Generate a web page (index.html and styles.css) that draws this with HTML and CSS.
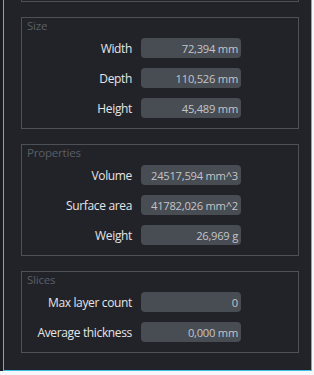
FILE: index.html
```html
<html>
<head>
  <title>Model info</title>
  <link rel="stylesheet" href="styles.css">
</head>
<body>
  <div class="window">
    <div class="panel">
      <div class="group-end"></div>

      <div class="group">
        <div class="title">Size</div>
        <div class="rows">
          <div class="label">Width</div><div class="field">72,394 mm</div>
          <div class="label">Depth</div><div class="field">110,526 mm</div>
          <div class="label">Height</div><div class="field">45,489 mm</div>
        </div>
      </div>

      <div class="group">
        <div class="title">Properties</div>
        <div class="rows">
          <div class="label">Volume</div><div class="field">24517,594 mm^3</div>
          <div class="label">Surface area</div><div class="field">41782,026 mm^2</div>
          <div class="label">Weight</div><div class="field">26,969 g</div>
        </div>
      </div>

      <div class="group">
        <div class="title">Slices</div>
        <div class="rows">
          <div class="label">Max layer count</div><div class="field">0</div>
          <div class="label">Average thickness</div><div class="field">0,000 mm</div>
        </div>
      </div>
    </div>
  </div>
</body>
</html>
```

FILE: styles.css
```css
body{
    margin:0;
    background:#f4f6f7;
    font-family:"Open Sans", sans-serif;
}

.window{
    display:flex;
    width:312px;
    height:371px;
    background:#1b1c20;
}

.panel{
    flex:1;
    margin-left:3px;
    border:1px solid #3fbfe4;
    border-top:none;
    background:#212329;
}

/* bottom of the box above, cut off */
.group-end{
    height:1px;
    margin:0 12px 0 17px;
    border:1px solid #4d5056;
    border-top:none;
}

.group{
    margin:15px 12px 0 17px;
    border:1px solid #4d5056;
    padding-bottom:10px;
}

.title{
    height:16px;
    line-height:16px;
    margin-bottom:4px;
    padding-left:5px;
    font-size:11.5px;
    letter-spacing:-0.2px;
    color:#5b5e65;
}

.rows{
    display:grid;
    grid-template-columns:110px 100px;
    column-gap:9px;
    row-gap:10px;
}

.label{
    height:20px;
    line-height:21px;
    text-align:right;
    font-size:12px;
    letter-spacing:-0.35px;
    color:#e4e5e7;
    white-space:nowrap;
}

.field{
    height:20px;
    line-height:21px;
    padding-right:3px;
    border-radius:4px;
    background:#484c53;
    text-align:right;
    font-size:11.2px;
    letter-spacing:-0.25px;
    color:#c3c5c9;
    white-space:nowrap;
}
```
